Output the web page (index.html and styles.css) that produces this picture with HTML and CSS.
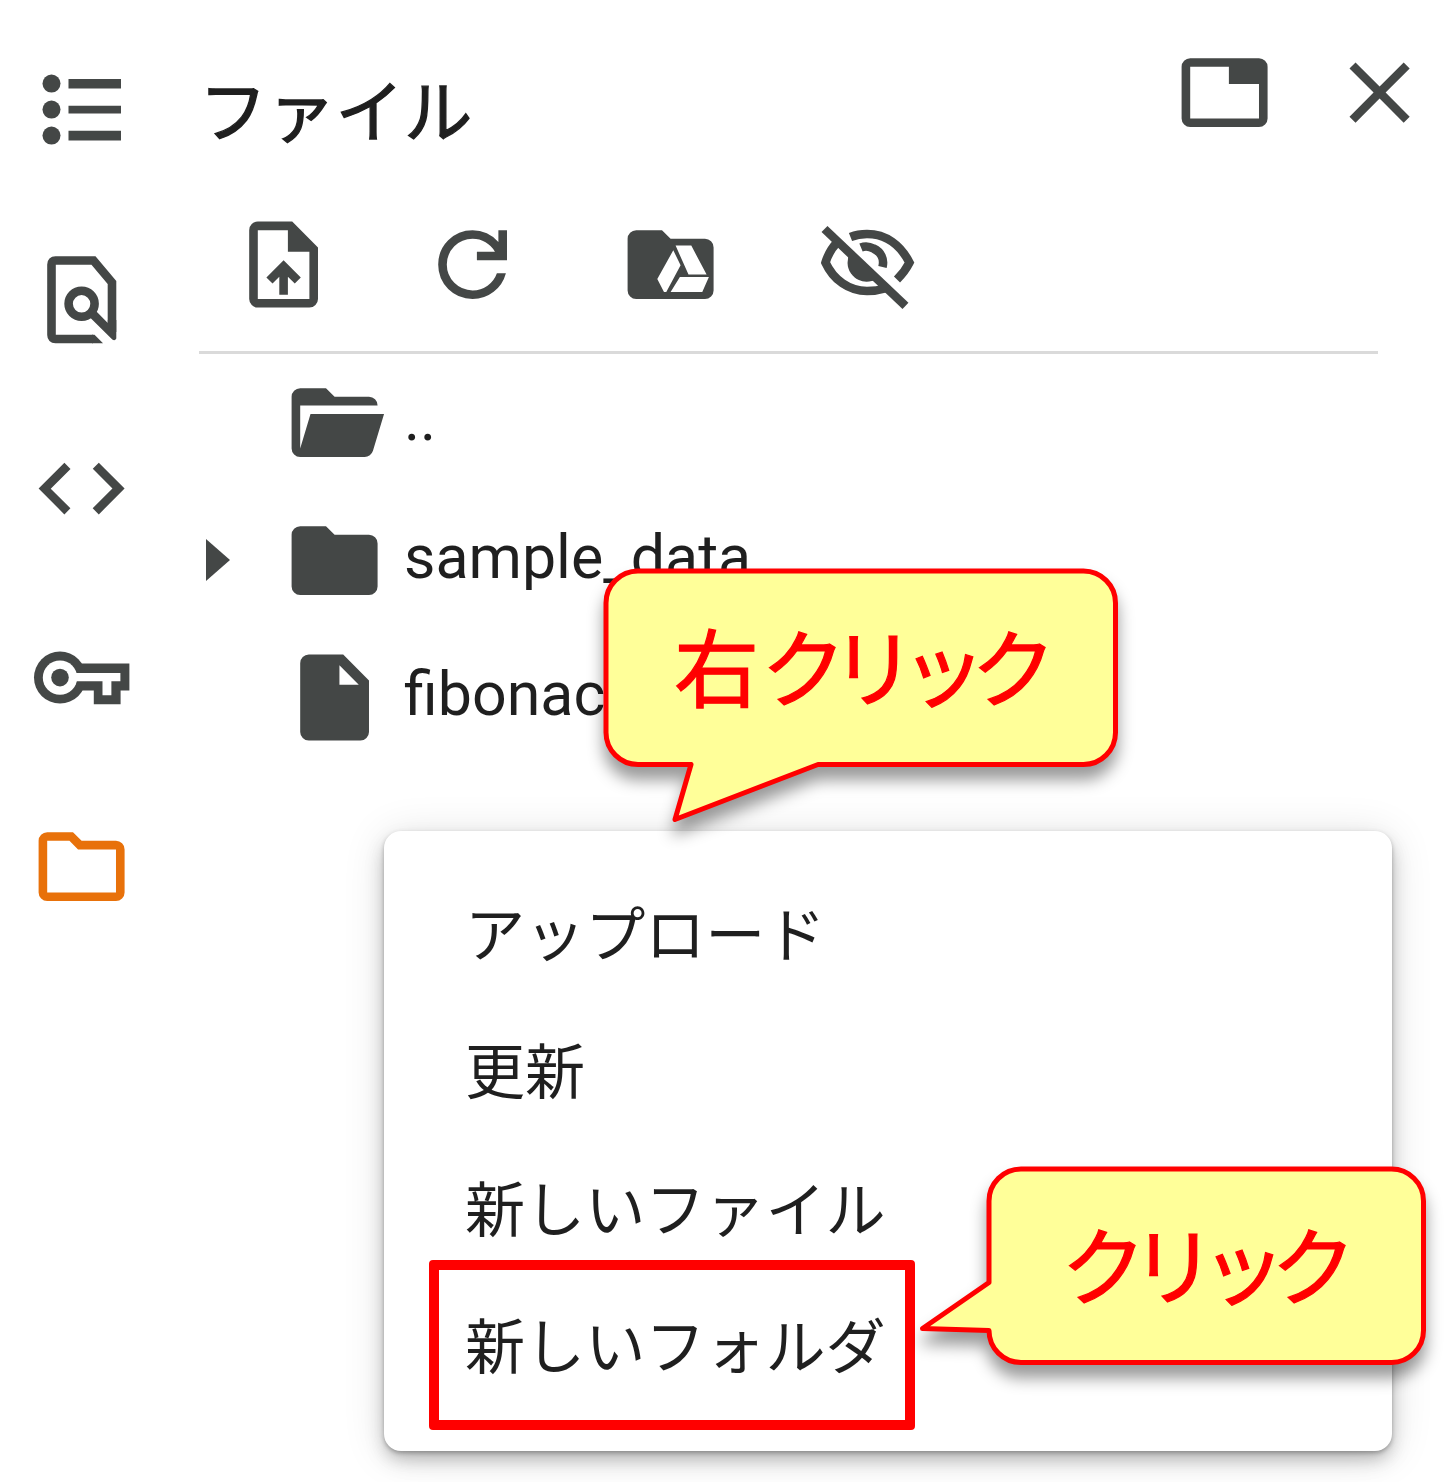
FILE: index.html
```html
<!DOCTYPE html>
<html lang="ja">
<head>
<meta charset="utf-8">
<title>ファイル</title>
<link rel="stylesheet" href="styles.css">
</head>
<body>
<div class="app">
  <nav class="rail">
    <svg class="icon" viewBox="0 0 103.2 103.2"><circle cx="21.5" cy="25.6" r="9"/><circle cx="21.500" cy="51.600" r="9"/><circle cx="21.500" cy="77.600" r="9"/><path d="M38.500 21H91v9.600H38.500zM38.500 47.800H91v7.600H38.500zM38.500 72.800H91v9.600H38.500z"/></svg>
    <svg class="icon" viewBox="0 0 103.2 103.2"><path class="line" d="M63 91H25.500q-4 0-4-4v-70.500q0-4 4-4H63.500L82 34.500V84"/><path d="M62 86.700h2.500L73 95.300H62z"/><circle class="line" cx="51.600" cy="55.800" r="13"/><path d="M57 66.500 63 60 77.800 75V72H86.300v18.500q-1.300 3-4 1z"/></svg>
    <svg class="icon" viewBox="0 -960 960 960"><path d="M320-240 80-480l240-240 57 57-184 184 183 183-56 56Zm320 0-57-57 184-184-183-183 56-56 240 240-240 240Z"/></svg>
    <svg class="icon" viewBox="0 0 103.2 103.2"><path d="M50 37.600H99.400V64.500H90.600V78.200H63.800V64.500H50z"/><circle cx="30" cy="51.600" r="26"/><circle class="hole" cx="30" cy="51.600" r="17.200"/><path class="hole" d="M44 47H90.400V55.300H81.400V69.200H72.500V55.300H44z"/><circle cx="30" cy="51.600" r="8.800"/></svg>
    <svg class="icon active" viewBox="0 -960 960 960"><path d="M160-160q-33 0-56.500-23.500T80-240v-480q0-33 23.500-56.500T160-800h240l80 80h320q33 0 56.500 23.500T880-640v400q0 33-23.500 56.500T800-160H160Zm0-80h640v-400H447l-80-80H160v480Z"/></svg>
  </nav>

  <main class="panel">
    <header class="header">
      <h1 class="title">ファイル</h1>
      <div class="window-actions">
        <svg class="icon" viewBox="0 -960 960 960"><path d="M160-160q-33 0-56.500-23.500T80-240v-480q0-33 23.500-56.500T160-800h640q33 0 56.500 23.500T880-720v480q0 33-23.500 56.500T800-160H160Zm0-80h640v-320H520v-160H160v480Z"/></svg>
        <svg class="icon" viewBox="0 -960 960 960"><path d="m256-200-56-56 224-224-224-224 56-56 224 224 224-224 56 56-224 224 224 224-56 56-224-224-224 224Z"/></svg>
      </div>
    </header>

    <div class="toolbar">
      <svg class="icon" viewBox="0 -960 960 960"><path d="M440-200h80v-167l64 64 56-57-160-160-160 160 57 56 63-63v167ZM240-80q-33 0-56.500-23.500T160-160v-640q0-33 23.500-56.500T240-880h320l240 240v480q0 33-23.500 56.500T720-80H240Zm280-520v-200H240v640h480v-440H520Z"/></svg>
      <svg class="icon" viewBox="0 -960 960 960"><path d="M480-160q-134 0-227-93t-93-227q0-134 93-227t227-93q69 0 132 28.500T720-690v-110h80v280H520v-80h168q-32-56-87.500-88T480-720q-100 0-170 70t-70 170q0 100 70 170t170 70q77 0 139-44t87-116h84q-28 106-114 173t-196 67Z"/></svg>
      <svg class="icon" viewBox="0 -960 960 960"><path d="M160-160q-33 0-56.500-23.500T80-240v-480q0-33 23.500-56.500T160-800h240l80 80h320q33 0 56.500 23.500T880-640v400q0 33-23.500 56.500T800-160H160Z"/><path class="hole" transform="translate(0 -960) scale(9.302)" d="M54.300 37.300 61.600 52.300 47.300 78.900 45 78.900 38.300 65.900zM56.600 32.600H72.300L87.600 61.600H69.500zM60.900 63.900H89.900L83.300 78.900H51.600z"/></svg>
      <svg class="icon" viewBox="0 0 103.2 103.2"><path class="line" d="M35.500 24Q43 21 52 21C71 21 85.500 32 94.500 49.600Q90 58.500 82 66.500M22 29.500Q14 38 10.500 49.600C18.500 67 34 78 52 78Q62 78 70 75.500"/><path class="line" d="M46 34.500Q52 32 58.500 35.500C66 39 69.500 46 67.500 54"/><path d="M34.500 40Q30 52 36 60.500C43 70 53 70 62 66.500z"/><path class="line" d="M9.500 16 90.500 93"/></svg>
    </div>

    <div class="tree">
      <div class="row">
        <span class="twisty"></span>
        <svg class="icon" viewBox="0 -960 960 960"><path d="M160-160q-33 0-56.500-23.500T80-240v-480q0-33 23.500-56.500T160-800h240l80 80h320q33 0 56.500 23.500T880-640H160v400l96-320h684L837-217q-8 26-29.500 41.500T760-160H160Z"/></svg>
        <span class="name">..</span>
      </div>
      <div class="row">
        <span class="twisty"><svg class="arrow" viewBox="0 0 24 42"><path d="M0 0 24 21 0 42z"/></svg></span>
        <svg class="icon" viewBox="0 -960 960 960"><path d="M160-160q-33 0-56.500-23.500T80-240v-480q0-33 23.500-56.500T160-800h240l80 80h320q33 0 56.500 23.500T880-640v400q0 33-23.500 56.500T800-160H160Z"/></svg>
        <span class="name">sample_data</span>
      </div>
      <div class="row">
        <span class="twisty"></span>
        <svg class="icon" viewBox="0 -960 960 960"><path d="M240-80q-33 0-56.500-23.500T160-160v-640q0-33 23.500-56.500T240-880h320l240 240v480q0 33-23.500 56.500T720-80H240Zm285-520h180L525-780v180Z"/></svg>
        <span class="name">fibonac</span>
      </div>
    </div>
  </main>
</div>

<div class="menu">
  <div class="menu-item">アップロード</div>
  <div class="menu-item">更新</div>
  <div class="menu-item">新しいファイル</div>
  <div class="menu-item">新しいフォルダ</div>
</div>

<div class="highlight"></div>

<div class="callout callout-right-click">
  <svg class="bubble" viewBox="0 0 520 260"><path d="M35.500 3H483.500A32 32 0 0 1 515.500 35V164.500A32 32 0 0 1 483.500 196.500H218L75 251.500 91 196.500H38A32 32 0 0 1 6 164.500V35A32 32 0 0 1 38 3z"/></svg>
  <span class="label">右<span class="kana">クリック</span></span>
</div>

<div class="callout callout-click">
  <svg class="bubble" viewBox="0 0 510 200"><path d="M105.500 3H473A32 32 0 0 1 505.500 35V164.500A32 32 0 0 1 473 196.500H103A32 32 0 0 1 71 164.500L4.500 162.500 71 116.500V35A32 32 0 0 1 103 3z"/></svg>
  <span class="label"><span class="kana">クリック</span></span>
</div>
</body>
</html>
```

FILE: styles.css
```css
* {
  box-sizing: border-box;
}

body {
  position: relative;
  width: 1445px;
  height: 1482px;
  margin: 0;
  overflow: hidden;
  background: #fff;
  color: #1f1f1f;
  font-family: Roboto, "Noto Sans CJK JP", sans-serif;
}

.app {
  display: flex;
  height: 100%;
}

.icon {
  display: block;
  flex: none;
  width: 103.2px;
  height: 103.2px;
  fill: #444746;
}

.icon.active {
  fill: #e8710a;
}

.icon .line {
  fill: none;
  stroke: #444746;
  stroke-width: 8.6;
}

.icon .hole {
  fill: #fff;
}

.rail {
  display: flex;
  flex-direction: column;
  gap: 86px;
  width: 199px;
  padding: 58.4px 0 0 30.4px;
}

.panel {
  flex: 1;
}

.header {
  display: flex;
  justify-content: space-between;
  height: 213.4px;
  padding: 38.4px 13.4px 0 0;
}

.title {
  height: 140px;
  margin: 0;
  font-family: "Noto Sans CJK JP", sans-serif;
  font-size: 68.3px;
  font-weight: 400;
  line-height: 140px;
  -webkit-text-stroke: 1.3px #1f1f1f;
}

.window-actions {
  display: flex;
  gap: 52px;
  padding-top: 3px;
}

.toolbar {
  display: flex;
  gap: 93px;
  width: 1179px;
  height: 140.6px;
  padding-left: 33.2px;
  border-bottom: 3px solid #dadada;
}

.toolbar .icon:nth-child(2) {
  margin: 0 1.5px 0 -7.5px;
}

.row {
  display: flex;
  align-items: center;
  height: 137.6px;
}

.twisty {
  width: 84.4px;
  padding-left: 7px;
}

.arrow {
  display: block;
  width: 24px;
  height: 42px;
  fill: #444746;
}

.name {
  padding: 0 0 6px 17.4px;
  font-size: 60.9px;
}

.menu {
  position: absolute;
  top: 831px;
  left: 384px;
  width: 1008px;
  height: 620px;
  padding: 30.6px 0 0 81px;
  border-radius: 17px;
  background: #fff;
  box-shadow: 0 2px 4px rgba(0, 0, 0, 0.25), 0 9px 17px -4px rgba(0, 0, 0, 0.18), 0 10px 21px rgba(0, 0, 0, 0.12), 0 4px 43px rgba(0, 0, 0, 0.12);
}

.menu-item {
  height: 137.6px;
  font-family: "Noto Sans CJK JP", sans-serif;
  font-size: 60.1px;
  line-height: 137.6px;
}

.highlight {
  position: absolute;
  top: 1260px;
  left: 429px;
  width: 486px;
  height: 170px;
  border: 10px solid #f00;
  border-radius: 4px;
}

.callout {
  position: absolute;
}

.callout-right-click {
  top: 568px;
  left: 600px;
  width: 520px;
  height: 260px;
}

.callout-click {
  top: 1166px;
  left: 918px;
  width: 510px;
  height: 200px;
}

.bubble {
  display: block;
  width: 100%;
  height: 100%;
  overflow: visible;
  fill: #ff9;
  stroke: #f00;
  stroke-width: 5;
  stroke-linejoin: round;
  filter: drop-shadow(0 13px 8px rgba(0, 0, 0, 0.4));
}

.label {
  position: absolute;
  top: -1px;
  left: 74px;
  color: #f00;
  font-family: "Noto Sans CJK JP", sans-serif;
  font-size: 85px;
  font-weight: 400;
  line-height: 194px;
  white-space: nowrap;
  -webkit-text-stroke: 1.2px #f00;
}

.callout-click .label {
  left: 143px;
}

.kana {
  letter-spacing: -15px;
}

.callout-right-click .kana {
  margin-left: 2px;
}
```
